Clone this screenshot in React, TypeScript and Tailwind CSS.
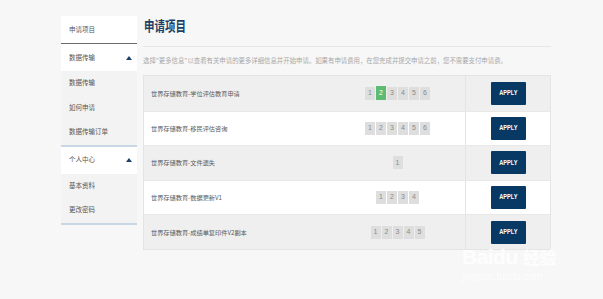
import React from 'react';

const cjk = "font-['Noto_Sans_CJK_SC','Noto_Sans',sans-serif]";

const rows = [
  { name: '世界存储教育-学位评估教育申请', pages: 6, active: 2 },
  { name: '世界存储教育-移民评估咨询', pages: 6, active: 0 },
  { name: '世界存储教育-文件遗失', pages: 1, active: 0 },
  { name: '世界存储教育-数据更新V1', pages: 4, active: 0 },
  { name: '世界存储教育-成绩单复印件V2副本', pages: 5, active: 0 },
];

const Caret = () => (
  <svg width="6" height="4" viewBox="0 0 6 4" className="mr-[5px]">
    <path d="M3 0 L6 4 L0 4 Z" fill="#1d3f66" />
  </svg>
);

const SideHeader = ({ label, caret }: { label: string; caret?: boolean }) => (
  <div className="h-[27px] bg-white flex items-center justify-between pl-[8px]">
    <span className="text-[6.5px] text-[#555]">{label}</span>
    {caret && <Caret />}
  </div>
);

const SideItem = ({ label }: { label: string }) => (
  <div className="h-[24.5px] flex items-center pl-[8px] text-[6.5px] text-[#555]">{label}</div>
);

const Pager = ({ count, active }: { count: number; active: number }) => (
  <div className="flex gap-[1px]">
    {Array.from({ length: count }, (_, i) => i + 1).map((n) => (
      <div
        key={n}
        className={
          n === active
            ? 'w-[10px] h-[14px] -my-[0.5px] bg-[#5dbb72] text-white flex items-center justify-center text-[7px]'
            : 'w-[10px] h-[13px] bg-[#dedede] text-[#8a8a8a] flex items-center justify-center text-[7px]'
        }
      >
        {n}
      </div>
    ))}
  </div>
);

export default function App() {
  return (
    <div className={`relative w-[603px] h-[299px] overflow-hidden bg-[#f7f7f7] flex items-start pl-[61px] ${cjk}`}>
      {/* Sidebar */}
      <div className="w-[76px] mt-[16px] bg-[#f3f3f3]">
        <div className="border-b border-[#6b6b6b]">
          <SideHeader label="申请项目" />
        </div>
        <SideHeader label="数据传输" caret />
        <SideItem label="数据传输" />
        <SideItem label="如何申请" />
        <SideItem label="数据传输订单" />
        <div className="h-[2px] bg-[#c9d6e3]" />
        <SideHeader label="个人中心" caret />
        <SideItem label="基本资料" />
        <SideItem label="更改密码" />
        <div className="h-[2px] bg-[#c9d6e3]" />
      </div>

      {/* Main */}
      <div className="ml-[6px] w-[408px]">
        <div className="h-[47px] flex items-center pt-[5px] border-b border-[#e6e6e6] pl-[1px]">
          <span className="inline-block text-[10.5px] font-bold text-[#1d3f66] scale-y-[1.35]">申请项目</span>
        </div>
        <div className="h-[28px] flex items-center text-[6.4px] text-[#a8a8a8] whitespace-nowrap">
          选择"更多信息"以查看有关申请的更多详细信息并开始申请。如果有申请费用，在您完成并提交申请之前，您不需要支付申请费。
        </div>
        <div className="border border-[#e4e4e4]">
          {rows.map((r, i) => (
            <div
              key={r.name}
              className={`grid grid-cols-[186px_135px_85px] h-[34.6px] ${i % 2 === 0 ? 'bg-[#efefef]' : 'bg-white'} ${i > 0 ? 'border-t border-[#e8e8e8]' : ''}`}
            >
              <div className="flex items-center pl-[7px] text-[6.2px] text-[#5a5a5a] whitespace-nowrap">{r.name}</div>
              <div className="flex items-center justify-center font-['Liberation_Sans',sans-serif]">
                <Pager count={r.pages} active={r.active} />
              </div>
              <div className="flex items-center justify-center border-l border-[#e4e4e4]">
                <div className="w-[35px] h-[23px] bg-[#083864] rounded-[1px] flex items-center justify-center">
                  <span className="inline-block text-[7px] font-bold text-white font-['Liberation_Sans',sans-serif] scale-x-[0.8]">APPLY</span>
                </div>
              </div>
            </div>
          ))}
        </div>
      </div>

      {/* Watermark */}
      <div className="absolute left-[462px] top-[246px] pointer-events-none select-none font-['Liberation_Sans',sans-serif]">
        <div className="text-[21px] font-bold leading-none tracking-tight text-white/80">
          Baidu <span className={`text-[17px] ${cjk}`}>经验</span>
        </div>
        <div className="text-[10px] leading-none mt-[5px] text-white/70">jingyan.baidu.com</div>
      </div>
    </div>
  );
}
